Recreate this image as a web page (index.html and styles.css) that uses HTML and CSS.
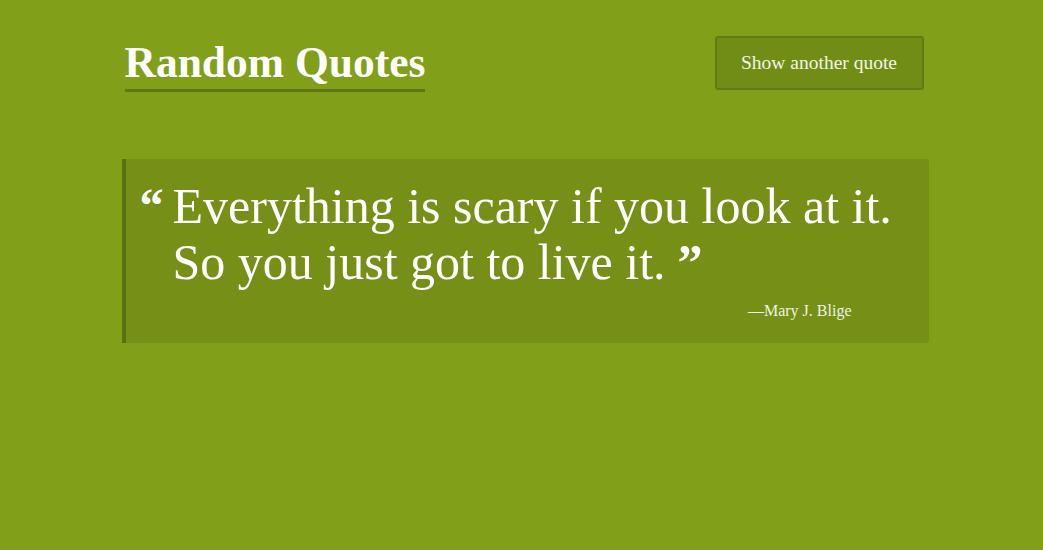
FILE: index.html
```html
<!DOCTYPE html>
<html lang="en">
<head>
<meta charset="utf-8">
<title>Random Quotes</title>
<link rel="stylesheet" href="styles.css">
</head>
<body>
<div class="page">
  <header class="header">
    <h1 class="title">Random Quotes</h1>
    <button class="btn">Show another quote</button>
  </header>
  <blockquote class="quote">
    <p class="quote-text"><span class="mark open">&ldquo;</span><span class="words">Everything is scary if you look at it. So you just got to live it.</span></p>
    <footer class="author">&mdash;Mary J. Blige</footer>
  </blockquote>
</div>
</body>
</html>
```

FILE: styles.css
```css
html, body {
  margin: 0;
  padding: 0;
  background: #829f1a;
  height: 100%;
}
body {
  font-family: "Liberation Serif", "DejaVu Serif", serif;
  color: #ffffff;
}
.page {
  width: 814px;
  margin: 0 auto;
  padding-top: 36px;
  padding-left: 7px;
  box-sizing: border-box;
}
.header {
  display: flex;
  justify-content: space-between;
  align-items: flex-start;
  padding-left: 3px;
  padding-right: 5px;
}
.title {
  margin: 0;
  font-size: 43.5px;
  font-weight: 700;
  line-height: 52px;
  padding-bottom: 1px;
  border-bottom: 3px solid #5f7612;
}
.btn {
  font-family: inherit;
  font-size: 19.5px;
  color: #f2f5e6;
  background: #728d16;
  border: 2px solid #637b12;
  border-radius: 3px;
  width: 209px;
  height: 54px;
  cursor: pointer;
}
.quote {
  margin: 67px 0 0 0;
  background: #758f17;
  border-left: 4px solid #5a7012;
  border-radius: 0 3px 3px 0;
  padding: 19px 20px 23px 14px;
}
.quote-text {
  margin: 0;
  display: flex;
  font-size: 50px;
  line-height: 56px;
}
.mark.open {
  font-size: 48px;
  font-weight: 700;
  width: 33px;
  flex: none;
}
.words {
  display: block;
}
.words::after {
  content: "\201D";
  font-weight: 700;
  margin-left: 12px;
}
.author {
  text-align: right;
  font-size: 16px;
  margin-top: 12px;
  margin-right: 57px;
  color: #f0f3e2;
}
```
